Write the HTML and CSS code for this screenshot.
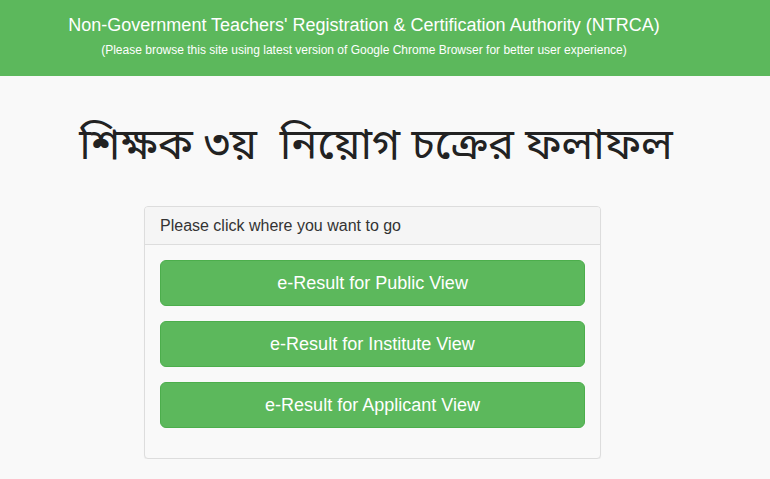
FILE: index.html
```html
<!DOCTYPE html>
<html lang="bn">
<head>
    <meta charset="UTF-8">
    <meta name="viewport" content="width=device-width, initial-scale=1.0">
    <title>NTRCA e-Result</title>
    <link rel="stylesheet" href="styles.css">
</head>
<body>
    <header class="site-header">
        <h1 class="site-title">Non-Government Teachers' Registration &amp; Certification Authority (NTRCA)</h1>
        <p class="site-note">(Please browse this site using latest version of Google Chrome Browser for better user experience)</p>
    </header>

    <main class="content">
        <h2 class="page-title">শিক্ষক ৩য়&nbsp; নিয়োগ চক্রের ফলাফল</h2>

        <div class="panel">
            <div class="panel-heading">Please click where you want to go</div>
            <div class="panel-body">
                <a class="btn" href="#">e-Result for Public View</a>
                <a class="btn" href="#">e-Result for Institute View</a>
                <a class="btn" href="#">e-Result for Applicant View</a>
            </div>
        </div>
    </main>
</body>
</html>
```

FILE: styles.css
```css
body {
    font-family: 'Liberation Sans', Arial, sans-serif;
    margin: 0;
    padding: 0;
    background-color: #f9f9f9;
    color: #333;
}

.site-header {
    background-color: #5cb85c;
    color: white;
    height: 76px;
    padding: 13px 42px 0 0;
    box-sizing: border-box;
    text-align: center;
}

.site-title {
    font-size: 18px;
    font-weight: normal;
    margin: 0;
    line-height: 24px;
}

.site-note {
    font-size: 12px;
    margin: 5px 0 0;
    line-height: 16px;
}

.content {
    padding-top: 37px;
}

.page-title {
    font-family: 'Noto Sans Bengali', 'Noto Sans', 'DejaVu Sans', sans-serif;
    font-size: 43.5px;
    font-weight: normal;
    color: #222;
    text-align: center;
    margin: 0 18px 23px 0;
    line-height: 70px;
}

.panel {
    width: 457px;
    margin-left: 144px;
    background-color: #f9f9f9;
    border: 1px solid #ddd;
    border-radius: 4px;
    box-shadow: 0 1px 1px rgba(0, 0, 0, 0.05);
    box-sizing: border-box;
}

.panel-heading {
    background-color: #f5f5f5;
    border-bottom: 1px solid #ddd;
    padding: 9px 15px;
    font-size: 16px;
    line-height: 19px;
    border-radius: 3px 3px 0 0;
}

.panel-body {
    padding: 15px 15px 15px;
}

.btn {
    display: block;
    background-color: #5cb85c;
    border: 1px solid #4cae4c;
    border-radius: 6px;
    color: white;
    text-decoration: none;
    text-align: center;
    font-size: 18px;
    line-height: 24px;
    padding: 10px 16px;
    margin-bottom: 15px;
}
```
